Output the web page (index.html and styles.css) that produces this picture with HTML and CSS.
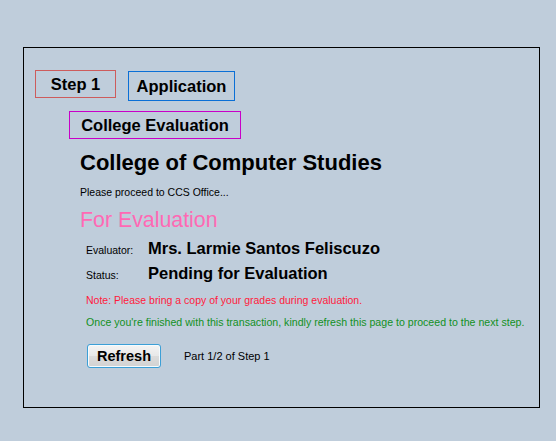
FILE: index.html
```html
<!DOCTYPE html>
<html>
<head>
<meta charset="utf-8">
<link rel="stylesheet" href="styles.css">
</head>
<body>
<div class="panel">
  <div class="tags">
    <div class="tag tag-step">Step 1</div>
    <div class="tag tag-app">Application</div>
  </div>
  <div class="tag tag-college">College Evaluation</div>
  <div class="content">
    <h1 class="title">College of Computer Studies</h1>
    <p class="small">Please proceed to CCS Office...</p>
    <p class="status-big">For Evaluation</p>
    <div class="row row-first">
      <span class="label">Evaluator:</span>
      <span class="value">Mrs. Larmie Santos Feliscuzo</span>
    </div>
    <div class="row">
      <span class="label">Status:</span>
      <span class="value">Pending for Evaluation</span>
    </div>
    <p class="small note">Note: Please bring a copy of your grades during evaluation.</p>
    <p class="small info">Once you're finished with this transaction, kindly refresh this page to proceed to the next step.</p>
    <div class="actions">
      <button class="btn">Refresh</button>
      <span class="part">Part 1/2 of Step 1</span>
    </div>
  </div>
</div>
</body>
</html>
```

FILE: styles.css
```css
html, body {
  margin: 0;
  padding: 0;
  background: #bfcddb;
  font-family: "Liberation Sans", Arial, sans-serif;
  color: #000;
}

.panel {
  box-sizing: border-box;
  margin: 47px 0 0 23px;
  width: 517px;
  height: 361px;
  border: 1px solid #000;
  padding: 22px 0 0 11px;
}

.tags {
  display: flex;
  align-items: flex-start;
  gap: 12px;
}

.tag {
  box-sizing: border-box;
  display: flex;
  align-items: center;
  justify-content: center;
  font-weight: bold;
  font-size: 16.5px;
}

.tag-step {
  width: 81px;
  height: 28px;
  border: 1px solid #cd5c5c;
}

.tag-app {
  width: 107px;
  height: 30px;
  margin-top: 1px;
  border: 1px solid #0a6fd6;
}

.tag-college {
  width: 172px;
  height: 28px;
  margin: 10px 0 0 34px;
  border: 1px solid #c800c8;
}

.content {
  padding-left: 45px;
}

.title {
  margin: 12px 0 0;
  font-size: 22px;
  line-height: 24px;
  font-weight: bold;
}

.small {
  margin: 0;
  font-size: 10.5px;
  line-height: 13px;
}

.content > .small:first-of-type {
  margin-top: 11px;
}

.status-big {
  margin: 9px 0 0;
  font-size: 21.33px;
  line-height: 24px;
  color: #ff69b4;
}

.row {
  display: flex;
  align-items: baseline;
  padding-left: 6px;
  height: 25px;
}

.row-first {
  margin-top: 4px;
}

.label {
  width: 62px;
  font-size: 10.5px;
  line-height: 13px;
}

.value {
  font-size: 16.5px;
  line-height: 25px;
  font-weight: bold;
}

.note {
  margin-top: 8px;
  padding-left: 6px;
  color: #ff1a3c;
}

.info {
  margin-top: 9px;
  padding-left: 6px;
  font-size: 10.6px;
  color: #12901e;
}

.actions {
  display: flex;
  align-items: center;
  gap: 23px;
  margin: 15px 0 0 7px;
}

.btn {
  box-sizing: border-box;
  width: 74px;
  height: 24px;
  padding: 0;
  border: 1px solid #3c9fd6;
  border-radius: 3px;
  background: linear-gradient(#f4f4f4, #e8e8e8 50%, #dcdcdc 51%, #d2d2d2);
  box-shadow: inset 0 0 0 1px #f4fbff;
  font-family: "Liberation Sans", Arial, sans-serif;
  font-size: 14.5px;
  font-weight: bold;
  color: #000;
}

.part {
  font-size: 11px;
}
```
